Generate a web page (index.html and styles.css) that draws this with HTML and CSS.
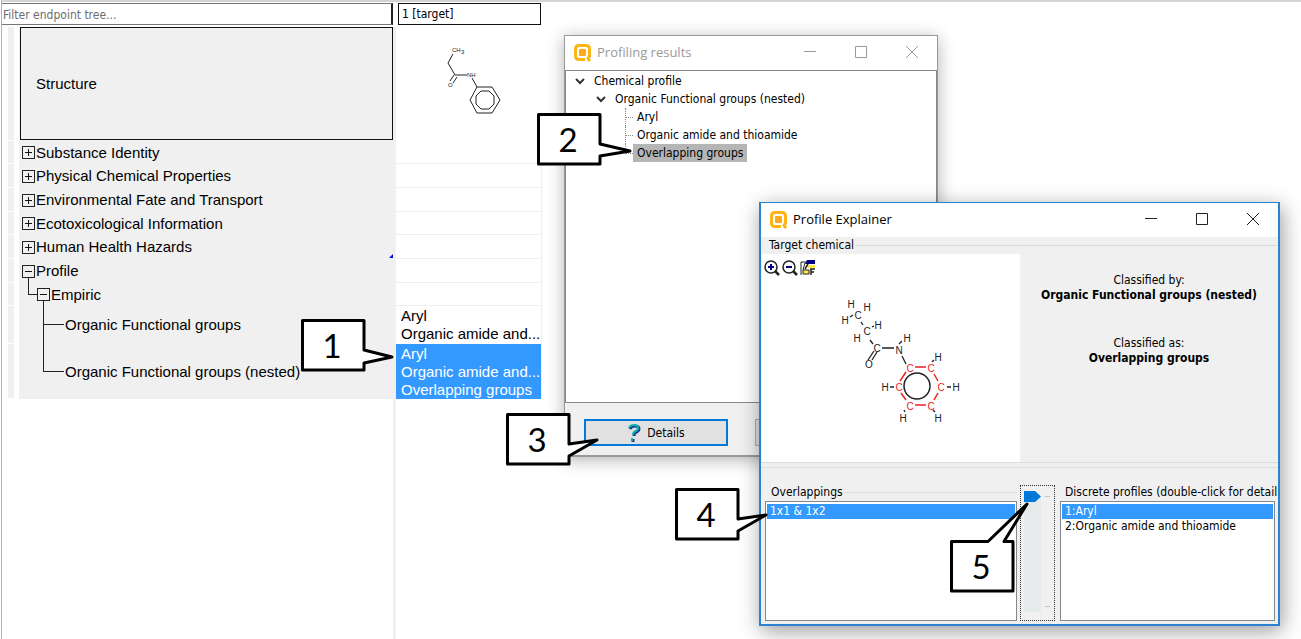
FILE: index.html
```html
<!DOCTYPE html>
<html lang="en">
<head>
  <meta charset="UTF-8" />
  <meta name="viewport" content="width=device-width, initial-scale=1.0"/>
  <title>Profiling results</title>
  <link rel="stylesheet" href="styles.css">
</head>
<body>

<!-- Endpoint tree and data matrix -->
<main class="workspace">
  <div class="top-row">
    <input class="filter" type="text" aria-label="Filter endpoint tree" placeholder="Filter endpoint tree...">
    <div class="target-head">1 [target]</div>
  </div>

  <table class="matrix">
    <tr class="structure-row">
      <td class="gutter"></td>
      <td class="node"><div class="structure">Structure</div></td>
      <td class="value">
        <svg class="molecule-small" width="144" height="110" viewBox="0 0 144 110" fill="none" stroke="#222">
          <path d="M57 27 L52 36 L59 48 H71 M58 48 L54 54 M61 50 L57 56 M76 51 L81 60 H96 L104 73 L96 86 H81 L74 73 L81 60"/>
          <path d="M85 64 H93 L98 69 V77 L93 82 H85 L80 77 V69 Z"/>
          <g class="atom-small">
            <text x="56" y="25">CH</text>
            <text x="65" y="27">3</text>
            <text x="71" y="50">NH</text>
            <text x="52" y="60">O</text>
          </g>
        </svg>
      </td>
    </tr>
    <tr>
      <td class="gutter"></td>
      <td class="node"><div class="branch"><button class="expander plus" aria-label="Expand"></button>Substance Identity</div></td>
      <td class="value"></td>
    </tr>
    <tr>
      <td class="gutter"></td>
      <td class="node"><div class="branch"><button class="expander plus" aria-label="Expand"></button>Physical Chemical Properties</div></td>
      <td class="value"></td>
    </tr>
    <tr>
      <td class="gutter"></td>
      <td class="node"><div class="branch"><button class="expander plus" aria-label="Expand"></button>Environmental Fate and Transport</div></td>
      <td class="value"></td>
    </tr>
    <tr>
      <td class="gutter"></td>
      <td class="node"><div class="branch"><button class="expander plus" aria-label="Expand"></button>Ecotoxicological Information</div></td>
      <td class="value"></td>
    </tr>
    <tr>
      <td class="gutter"></td>
      <td class="node marked"><div class="branch"><button class="expander plus" aria-label="Expand"></button>Human Health Hazards</div></td>
      <td class="value"></td>
    </tr>
    <tr>
      <td class="gutter"></td>
      <td class="node"><div class="branch"><button class="expander" aria-label="Collapse"></button>Profile</div></td>
      <td class="value"></td>
    </tr>
    <tr>
      <td class="gutter"></td>
      <td class="node"><div class="branch level-2"><button class="expander" aria-label="Collapse"></button>Empiric</div></td>
      <td class="value"></td>
    </tr>
    <tr class="groups-row">
      <td class="gutter"></td>
      <td class="node"><div class="branch level-3">Organic Functional groups</div></td>
      <td class="value">Aryl<br>Organic amide and...</td>
    </tr>
    <tr class="nested-row">
      <td class="gutter"></td>
      <td class="node"><div class="branch level-3 last">Organic Functional groups (nested)</div></td>
      <td class="value selected">Aryl<br>Organic amide and...<br>Overlapping groups</td>
    </tr>
  </table>
  <div class="rest"></div>
</main>

<!-- Profiling results window -->
<section class="window results">
  <header class="title-bar">
    <svg width="19" height="19" viewBox="0 0 19 19"><path d="M12 16.500H6Q2.500 16.500 2.500 13V6Q2.500 2.500 6 2.500H13Q16.500 2.500 16.500 6V13L15 15.500 17 18" fill="none" stroke="#fdb515" stroke-width="3"/><rect x="6" y="6" width="7" height="7" rx="1" fill="#ffa818"/></svg>
    <h1>Profiling results</h1>
    <div class="controls">
      <button aria-label="Minimize"><svg width="12" height="12" viewBox="0 0 12 12"><path d="M0 5.500H12"/></svg></button>
      <button aria-label="Maximize"><svg width="12" height="12" viewBox="0 0 12 12"><path d="M.5 .5H11.500V11.500H.5Z"/></svg></button>
      <button aria-label="Close"><svg width="12" height="12" viewBox="0 0 12 12"><path d="M0 0L12 12M12 0L0 12"/></svg></button>
    </div>
  </header>
  <ul class="profile-tree">
    <li><svg class="chevron" width="10" height="7" viewBox="0 0 10 7"><path d="M1 1L5 5L9 1"/></svg><span>Chemical profile</span></li>
    <li class="depth-1"><svg class="chevron" width="10" height="7" viewBox="0 0 10 7"><path d="M1 1L5 5L9 1"/></svg><span>Organic Functional groups (nested)</span></li>
    <li class="leaf"><span>Aryl</span></li>
    <li class="leaf"><span>Organic amide and thioamide</span></li>
    <li class="leaf last"><span class="picked">Overlapping groups</span></li>
  </ul>
  <div class="actions">
    <button class="action primary">
      <svg width="14" height="20" viewBox="0 0 14 20" fill="none" stroke-width="3"><path d="M3 6Q4 3 8 3Q12 3 12 6Q12 8 8 10Q7 11 7 13M6 16V19" stroke="#123c8c"/><path d="M2 5Q3 2 7 2Q11 2 11 5Q11 7 7 9Q6 10 6 12M5 15V18" stroke="#12b5b5" stroke-width="2"/></svg>
      Details
    </button>
    <button class="action" aria-label="Close results"></button>
  </div>
</section>

<!-- Profile Explainer window -->
<section class="window explainer">
  <header class="title-bar">
    <svg width="19" height="19" viewBox="0 0 19 19"><path d="M12 16.500H6Q2.500 16.500 2.500 13V6Q2.500 2.500 6 2.500H13Q16.500 2.500 16.500 6V13L15 15.500 17 18" fill="none" stroke="#fdb515" stroke-width="3"/><rect x="6" y="6" width="7" height="7" rx="1" fill="#ffa818"/></svg>
    <h1>Profile Explainer</h1>
    <div class="controls">
      <button aria-label="Minimize"><svg width="12" height="12" viewBox="0 0 12 12"><path d="M0 5.500H12"/></svg></button>
      <button aria-label="Maximize"><svg width="12" height="12" viewBox="0 0 12 12"><path d="M.5 .5H11.500V11.500H.5Z"/></svg></button>
      <button aria-label="Close"><svg width="12" height="12" viewBox="0 0 12 12"><path d="M0 0L12 12M12 0L0 12"/></svg></button>
    </div>
  </header>

  <h2 class="group-title">Target chemical</h2>
  <div class="target">
    <div class="canvas">
      <div class="tools">
        <button aria-label="Zoom in"><svg width="16" height="16" viewBox="0 0 16 16" fill="none"><circle cx="7" cy="7" r="6" stroke="#222" stroke-width="1.500"/><path d="M11 11L15 15" stroke="#222" stroke-width="2.500"/><path d="M4 7H10M7 4V10" stroke="#000080" stroke-width="2"/></svg></button>
        <button aria-label="Zoom out"><svg width="16" height="16" viewBox="0 0 16 16" fill="none"><circle cx="7" cy="7" r="6" stroke="#222" stroke-width="1.500"/><path d="M11 11L15 15" stroke="#222" stroke-width="2.500"/><path d="M4 7H10" stroke="#000080" stroke-width="2"/></svg></button>
        <button aria-label="Display options"><svg width="16" height="16" viewBox="0 0 16 16" fill="none"><path d="M1 15V2H6M5 3L3 10" stroke="#222"/><path d="M7 0H15V4H5Z" fill="#000080"/><path d="M8 5H15V8H8Z" fill="#ffe94a"/><path d="M3 10H9V14H3Z" fill="#ffe94a" stroke="#222"/><path d="M5 9L8 4M10 9H15M11 9V15M11 12H14" stroke="#222" stroke-width="1.500"/></svg></button>
      </div>
      <svg class="molecule" width="160" height="150" viewBox="0 0 160 150" fill="none">
        <path stroke="#222" stroke-width="1.300" d="M30 27L33 25M41 32L43 35M52 37L54 36M50 50L53 54M54 61L48 70M57 62L52 70M62 58H74M79 54L82 51M82 66L86 74M112 72L114 70M127 97H131M70 97H74M113 120L115 122M84 120L85 122"/>
        <path stroke="#f02020" stroke-width="1.500" d="M95 77H106M114 84L118 91M118 103L114 110M106 115H95M86 110L81 103M80 91L86 82"/>
        <circle cx="97" cy="96" r="13" stroke="#222" stroke-width="1.500"/>
        <g class="atom">
          <text x="31" y="18">H</text><text x="47" y="21">H</text><text x="25" y="34">H</text><text x="38" y="29">C</text>
          <text x="47" y="45">C</text><text x="58" y="39">H</text><text x="37" y="52">H</text><text x="57" y="62">C</text>
          <text x="87" y="52">H</text><text x="79" y="64">N</text><text x="49" y="78">O</text><text x="118" y="71">H</text>
          <text x="136" y="101">H</text><text x="118" y="132">H</text><text x="83" y="132">H</text><text x="65" y="101">H</text>
        </g>
        <g class="atom hit">
          <text x="90" y="82">C</text><text x="111" y="82">C</text><text x="121" y="101">C</text>
          <text x="111" y="120">C</text><text x="90" y="120">C</text><text x="79" y="101">C</text>
        </g>
      </svg>
    </div>
    <dl class="classification">
      <dt>Classified by:</dt>
      <dd>Organic Functional groups (nested)</dd>
      <dt>Classified as:</dt>
      <dd>Overlapping groups</dd>
    </dl>
  </div>
  <div class="splitter"></div>

  <div class="bottom">
    <div class="group">
      <h2 class="group-title" id="overlap-title">Overlappings</h2>
      <ul class="listbox" role="listbox" aria-labelledby="overlap-title">
        <li class="active" role="option" aria-selected="true">1x1 &amp; 1x2</li>
      </ul>
    </div>
    <div class="slider">
      <input type="range" min="0" max="1" value="0" aria-label="Overlap">
      <div class="ticks"><i></i><i></i></div>
    </div>
    <div class="group discrete">
      <h2 class="group-title" id="discrete-title">Discrete profiles (double-click for detail</h2>
      <ul class="listbox" role="listbox" aria-labelledby="discrete-title">
        <li class="active" role="option" aria-selected="true">1:Aryl</li>
        <li role="option">2:Organic amide and thioamide</li>
      </ul>
    </div>
  </div>
</section>

<!-- Step callouts -->
<svg class="callout step-1" width="65" height="53"><path d="M1.500 1.500H63V31L91 38L63 44V51H1.500Z"/><text x="31" y="39">1</text></svg>
<svg class="callout step-2" width="65" height="53"><path d="M1.500 1.500H63V31L93 38L63 43V51H1.500Z"/><text x="31" y="39">2</text></svg>
<svg class="callout step-3" width="65" height="53"><path d="M1.500 1.500H63V31L91 27L63 43V51H1.500Z"/><text x="31" y="39">3</text></svg>
<svg class="callout step-4" width="65" height="53"><path d="M1.500 1.500H63V31L91 27L63 43V51H1.500Z"/><text x="31" y="39">4</text></svg>
<svg class="callout step-5" width="65" height="53"><path d="M1.500 1.500H38L77 -36L54 1.500H63V51H1.500Z"/><text x="31" y="39">5</text></svg>

</body>
</html>
```
FILE: styles.css
```css
* {
  box-sizing: border-box;
}

body {
  margin: 0;
  background: #fff;
  color: #000;
  font-family: "DejaVu Sans Condensed", "DejaVu Sans", "Noto Sans", sans-serif;
  font-size: 12px;
  overflow: hidden;
}

button {
  margin: 0;
  padding: 0;
  border: none;
  background: none;
  color: inherit;
  font: inherit;
}

ul, dl, dd, h1, h2 {
  margin: 0;
  padding: 0;
  font-size: inherit;
  font-weight: normal;
  list-style: none;
}

/* Workspace */
.workspace {
  display: flex;
  flex-direction: column;
  height: 100vh;
  margin-left: 1px;
  border-top: 2px solid #d4d4d4;
  border-left: 1px solid #b0b0b0;
}

.top-row {
  display: flex;
  gap: 5px;
  padding-top: 1px;
}

.filter {
  width: 391px;
  height: 22px;
  padding: 1px 1px 0;
  border: 1px solid #777;
  border-right: 2px solid #222;
  border-left: none;
  background: #fff;
  font: inherit;
  outline: none;
}

.filter::placeholder {
  color: #6d6d6d;
}

.target-head {
  width: 143px;
  height: 22px;
  padding-left: 3px;
  border: 1px solid #111;
  line-height: 21px;
}

.matrix {
  width: 540px;
  margin-top: 2px;
  border-collapse: separate;
  border-spacing: 0;
  table-layout: fixed;
  font-family: "Liberation Sans", Arial, sans-serif;
  font-size: 15px;
  line-height: 18px;
  white-space: nowrap;
}

.matrix td {
  height: 24px;
  padding: 0;
}

.matrix tr:nth-child(3n+2) td {
  height: 23px;
}

.matrix .structure-row td {
  height: 114px;
}

.matrix .groups-row td {
  height: 38px;
}

.matrix .nested-row td {
  height: 55px;
}

.matrix .gutter {
  width: 17px;
  border-bottom: 1px solid #fff;
  background: linear-gradient(#f0f0f0, #f0f0f0) 6px 0 / 6px 100% no-repeat;
}

.matrix .node {
  position: relative;
  width: 377px;
  background: #f0f0f0;
}

.structure {
  height: 113px;
  margin: 0 3px 1px 1px;
  padding-left: 15px;
  border: 1px solid #111;
  line-height: 112px;
}

.value {
  border-right: 1px solid #f0f0f0;
  border-bottom: 1px solid #f0f0f0;
  vertical-align: top;
}

.structure-row .value {
  border-color: transparent;
}

.matrix .groups-row .value,
.matrix .nested-row .value {
  padding: 1px 0 0 5px;
  border-bottom: none;
}

.value.selected {
  background: #3399ff;
  color: #fff;
}

.molecule-small {
  display: block;
}

.atom-small {
  fill: #222;
  stroke: none;
  font-size: 6px;
}

.branch {
  display: flex;
  align-items: center;
  gap: 1px;
  padding-left: 3px;
}

.branch.level-2 {
  padding-left: 18px;
}

.branch.level-3 {
  padding-left: 46px;
}

.expander {
  position: relative;
  width: 13px;
  height: 13px;
  border: 1px solid #222;
}

.expander::before,
.expander.plus::after {
  content: "";
  position: absolute;
  top: 5px;
  left: 2px;
  width: 7px;
  height: 1px;
  background: #111;
}

.expander.plus::after {
  top: 2px;
  left: 5px;
  width: 1px;
  height: 7px;
}

/* Lines that join a node to its parent */
.level-2::before,
.level-3::before {
  content: "";
  position: absolute;
  bottom: 50%;
  border: solid #222;
  border-width: 0 0 1px 1px;
}

.level-2::before {
  left: 9px;
  width: 9px;
  height: 17px;
}

.level-3::before {
  left: 24px;
  width: 20px;
  height: 24px;
}

.level-3.last::before {
  height: 47px;
}

.marked::after {
  content: "";
  position: absolute;
  right: 3px;
  bottom: 1px;
  border: 2px solid #0000e0;
  border-top-color: transparent;
  border-left-color: transparent;
}

.rest {
  flex: 1;
  width: 394px;
  border-right: 3px solid #f0f0f0;
}

/* Windows */
.window {
  position: absolute;
  display: flex;
  flex-direction: column;
  background: #f0f0f0;
}

.results {
  top: 35px;
  left: 564px;
  width: 374px;
  height: 422px;
  border: 1px solid #999;
  border-bottom-width: 2px;
  box-shadow: 0 3px 16px rgba(0, 0, 0, 0.3);
}

.explainer {
  top: 202px;
  left: 759px;
  width: 521px;
  height: 424px;
  border: 1px solid #2b83cf;
  border-width: 1px 2px 2px;
  box-shadow: 2px 5px 20px rgba(0, 0, 0, 0.4);
}

.title-bar {
  display: flex;
  flex: none;
  align-items: center;
  gap: 5px;
  height: 34px;
  padding: 0 19px 2px 8px;
  background: #fff;
  font-family: "Open Sans", "Noto Sans", sans-serif;
  font-size: 13px;
}

.controls {
  display: flex;
  gap: 39px;
  margin-left: auto;
}

.controls button {
  display: flex;
}

.controls svg {
  fill: none;
  stroke: #222;
}

.results .title-bar {
  color: #999;
}

.results .controls svg {
  stroke: #999;
}

.profile-tree {
  flex: 1;
  padding-top: 1px;
  border: 1px solid #828790;
  background: #fff;
}

.profile-tree li {
  display: flex;
  align-items: center;
  height: 18px;
  padding-left: 9px;
}

.profile-tree span {
  padding: 1px 4px 0;
  line-height: 17px;
}

.profile-tree .depth-1 {
  padding-left: 30px;
}

.profile-tree .leaf {
  position: relative;
  padding-left: 67px;
}

.profile-tree .leaf::before,
.profile-tree .leaf::after {
  content: "";
  position: absolute;
  left: 59px;
}

.profile-tree .leaf::before {
  top: 9px;
  width: 8px;
  border-top: 1px dotted #888;
}

.profile-tree .leaf::after {
  top: 0;
  height: 18px;
  border-left: 1px dotted #888;
}

.profile-tree .last::after {
  height: 9px;
}

.profile-tree .picked {
  background: #b5b5b5;
}

.chevron {
  margin-right: 5px;
  fill: none;
  stroke: #333;
  stroke-width: 2;
}

.actions {
  display: flex;
  gap: 27px;
  height: 52px;
  padding: 16px 19px 0;
  overflow: hidden;
}

.action {
  display: flex;
  flex: none;
  align-items: center;
  justify-content: center;
  gap: 6px;
  width: 144px;
  height: 27px;
  border: 1px solid #adadad;
  background: #e1e1e1;
}

.action.primary {
  border: 2px solid #0078d7;
}

/* Explainer content */
.explainer > .group-title {
  margin-top: 1px;
}

.group-title {
  display: flex;
  flex: none;
  align-items: center;
  height: 15px;
  padding-left: 8px;
  line-height: 15px;
  white-space: nowrap;
}

.group-title::after {
  content: "";
  flex: 1;
  border-top: 1px solid #dcdcdc;
}

.target {
  display: flex;
  flex: none;
  height: 209px;
}

.canvas {
  width: 258px;
  margin: 1px 0 0 1px;
  background: #fff;
}

.tools {
  display: flex;
  align-items: flex-start;
  gap: 2px;
  height: 36px;
  padding: 6px 0 0 2px;
}

.tools svg {
  display: block;
}

.molecule {
  display: block;
  margin-left: 58px;
}

.atom {
  fill: #222;
  font: 10px "Liberation Sans", Arial, sans-serif;
  text-anchor: middle;
}

.atom.hit {
  fill: #f02020;
}

.classification {
  flex: 1;
  padding-top: 20px;
  line-height: 15px;
  text-align: center;
}

.classification dd {
  margin-bottom: 33px;
  font-weight: bold;
}

.splitter {
  flex: none;
  height: 6px;
  border: solid #dcdcdc;
  border-width: 1px 0;
}

.bottom {
  display: flex;
  flex: 1;
  min-height: 0;
  padding: 17px 3px 3px 4px;
}

.group {
  display: flex;
  flex: 1;
  flex-direction: column;
  min-width: 0;
}

.bottom .group-title {
  padding-left: 6px;
}

.bottom .discrete .group-title {
  padding-left: 5px;
}

.discrete {
  flex: none;
  width: 215px;
}

.listbox {
  flex: 1;
  margin-top: 1px;
  padding: 2px 1px;
  border: 1px solid #828790;
  background: #fff;
  line-height: 15px;
}

.listbox li {
  padding-left: 3px;
}

.listbox .active {
  background: #3399ff;
  color: #fff;
}

.slider {
  display: flex;
  justify-content: space-between;
  width: 35px;
  margin: 0 5px 0 3px;
  padding: 5px 4px 8px 3px;
  border: 1px dotted #333;
}

.slider input {
  width: 17px;
  height: 121px;
  margin: 0;
  appearance: none;
  background: linear-gradient(#e6eaea, #e6eaea) 0 6px no-repeat;
  writing-mode: vertical-lr;
}

.slider input::-webkit-slider-thumb {
  width: 17px;
  height: 11px;
  appearance: none;
  background: #0078d7;
  clip-path: polygon(0 0, 65% 0, 100% 50%, 65% 100%, 0 100%);
}

.ticks {
  display: flex;
  flex-direction: column;
  justify-content: space-between;
  padding: 5px 0;
}

.ticks i {
  width: 5px;
  height: 1px;
  background: #c4c4c4;
}

/* Callouts */
.callout {
  position: absolute;
  overflow: visible;
}

.callout path {
  fill: #fff;
  stroke: #000;
  stroke-width: 3;
  stroke-linejoin: round;
}

.callout text {
  font: 33px Lato, "Open Sans", sans-serif;
  text-anchor: middle;
}

.step-1 {
  top: 319px;
  left: 301px;
}

.step-2 {
  top: 113px;
  left: 537px;
}

.step-3 {
  top: 413px;
  left: 506px;
}

.step-4 {
  top: 488px;
  left: 675px;
}

.step-5 {
  top: 540px;
  left: 950px;
}
```
